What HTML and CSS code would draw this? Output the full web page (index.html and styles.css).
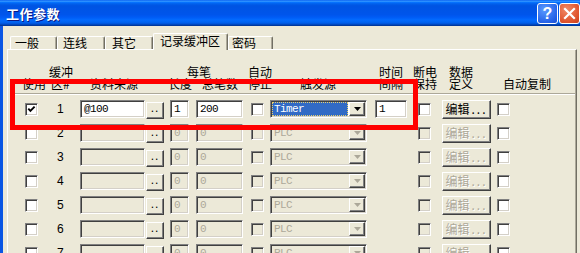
FILE: index.html
```
<!DOCTYPE html>
<html lang="zh-CN">
<head>
    <meta charset="UTF-8">
    <meta name="viewport" content="width=device-width, initial-scale=1.0">
    <title>工作参数</title>
    <link rel="stylesheet" href="styles.css">
</head>
<body>
<div class="window">
    <div class="titlebar">
        <span class="title">工作参数</span>
        <div class="caption">
            <span class="cap cap-help">?</span>
            <span class="cap cap-close">
                <svg width="19" height="19" viewBox="0 0 19 19"><path d="M5 5 L14 14 M14 5 L5 14" stroke="#fff" stroke-width="2.2" stroke-linecap="square"/></svg>
            </span>
        </div>
    </div>

    <div class="client">
        <!-- tab strip -->
        <div class="tabs">
            <span class="tab t-general">一般</span>
            <span class="tab t-link">连线</span>
            <span class="tab t-other">其它</span>
            <span class="tab t-buffer on">记录缓冲区</span>
            <span class="tab t-pass">密码</span>
        </div>

        <div class="panel">
            <!-- column headers, two lines -->
            <div class="hdr">
                <span class="h-buf1">缓冲</span>
                <span class="h-each">每笔</span>
                <span class="h-auto">自动</span>
                <span class="h-time">时间</span>
                <span class="h-power">断电</span>
                <span class="h-data">数据</span>

                <span class="h-use">使用</span>
                <span class="h-buf2">区#</span>
                <span class="h-src">资料来源</span>
                <span class="h-len">长度</span>
                <span class="h-tot">总笔数</span>
                <span class="h-stop">停止</span>
                <span class="h-trig">触发源</span>
                <span class="h-int">间隔</span>
                <span class="h-keep">保持</span>
                <span class="h-def">定义</span>
                <span class="h-copy">自动复制</span>
            </div>
            <div class="sep"></div>

            <div class="row">
                <span class="chk chk-use"><svg width="9" height="9" viewBox="0 0 9 9"><polyline points="1.3,3.6 3.4,5.8 7.6,1.6" fill="none" stroke="#000" stroke-width="1.9"/></svg></span>
                <span class="num">1</span>
                <span class="field w-src">@100</span>
                <span class="dots">..</span>
                <span class="field w-len">1</span>
                <span class="field w-tot">200</span>
                <span class="chk"></span>
                <span class="sel">
                    <span class="sel-val">Timer</span>
                    <span class="sel-btn"><svg width="7" height="4" viewBox="0 0 7 4"><polygon points="0,0 7,0 3.5,4" fill="#000"/></svg></span>
                </span>
                <span class="field w-int">1</span>
                <span class="chk"></span>
                <span class="edit">编辑<span class="ell">...</span></span>
                <span class="chk"></span>
            </div>

            <div class="row">
                <span class="chk chk-use"></span>
                <span class="num">2</span>
                <span class="field off w-src"></span>
                <span class="dots">..</span>
                <span class="field off w-len">0</span>
                <span class="field off w-tot">0</span>
                <span class="chk off"></span>
                <span class="sel off">
                    <span class="sel-val">PLC</span>
                    <span class="sel-btn"><svg width="7" height="4" viewBox="0 0 7 4"><polygon points="0,0 7,0 3.5,4" fill="#ACA899"/></svg></span>
                </span>
                <span></span>
                <span class="chk off"></span>
                <span class="edit off">编辑<span class="ell">...</span></span>
                <span class="chk"></span>
            </div>

            <div class="row">
                <span class="chk chk-use"></span>
                <span class="num">3</span>
                <span class="field off w-src"></span>
                <span class="dots">..</span>
                <span class="field off w-len">0</span>
                <span class="field off w-tot">0</span>
                <span class="chk off"></span>
                <span class="sel off">
                    <span class="sel-val">PLC</span>
                    <span class="sel-btn"><svg width="7" height="4" viewBox="0 0 7 4"><polygon points="0,0 7,0 3.5,4" fill="#ACA899"/></svg></span>
                </span>
                <span></span>
                <span class="chk off"></span>
                <span class="edit off">编辑<span class="ell">...</span></span>
                <span class="chk"></span>
            </div>

            <div class="row">
                <span class="chk chk-use"></span>
                <span class="num">4</span>
                <span class="field off w-src"></span>
                <span class="dots">..</span>
                <span class="field off w-len">0</span>
                <span class="field off w-tot">0</span>
                <span class="chk off"></span>
                <span class="sel off">
                    <span class="sel-val">PLC</span>
                    <span class="sel-btn"><svg width="7" height="4" viewBox="0 0 7 4"><polygon points="0,0 7,0 3.5,4" fill="#ACA899"/></svg></span>
                </span>
                <span></span>
                <span class="chk off"></span>
                <span class="edit off">编辑<span class="ell">...</span></span>
                <span class="chk"></span>
            </div>

            <div class="row">
                <span class="chk chk-use"></span>
                <span class="num">5</span>
                <span class="field off w-src"></span>
                <span class="dots">..</span>
                <span class="field off w-len">0</span>
                <span class="field off w-tot">0</span>
                <span class="chk off"></span>
                <span class="sel off">
                    <span class="sel-val">PLC</span>
                    <span class="sel-btn"><svg width="7" height="4" viewBox="0 0 7 4"><polygon points="0,0 7,0 3.5,4" fill="#ACA899"/></svg></span>
                </span>
                <span></span>
                <span class="chk off"></span>
                <span class="edit off">编辑<span class="ell">...</span></span>
                <span class="chk"></span>
            </div>

            <div class="row">
                <span class="chk chk-use"></span>
                <span class="num">6</span>
                <span class="field off w-src"></span>
                <span class="dots">..</span>
                <span class="field off w-len">0</span>
                <span class="field off w-tot">0</span>
                <span class="chk off"></span>
                <span class="sel off">
                    <span class="sel-val">PLC</span>
                    <span class="sel-btn"><svg width="7" height="4" viewBox="0 0 7 4"><polygon points="0,0 7,0 3.5,4" fill="#ACA899"/></svg></span>
                </span>
                <span></span>
                <span class="chk off"></span>
                <span class="edit off">编辑<span class="ell">...</span></span>
                <span class="chk"></span>
            </div>

            <div class="row">
                <span class="chk chk-use"></span>
                <span class="num">7</span>
                <span class="field off w-src"></span>
                <span class="dots">..</span>
                <span class="field off w-len">0</span>
                <span class="field off w-tot">0</span>
                <span class="chk off"></span>
                <span class="sel off">
                    <span class="sel-val">PLC</span>
                    <span class="sel-btn"><svg width="7" height="4" viewBox="0 0 7 4"><polygon points="0,0 7,0 3.5,4" fill="#ACA899"/></svg></span>
                </span>
                <span></span>
                <span class="chk off"></span>
                <span class="edit off">编辑<span class="ell">...</span></span>
                <span class="chk"></span>
            </div>
        </div>
    </div>

    <!-- red annotation box drawn over the first row -->
    <div class="mark"></div>
</div>
</body>
</html>
```

FILE: styles.css
```
body {
    margin: 0;
    width: 580px;
    height: 253px;
    overflow: hidden;
    background: #ECE9D8;
    font-family: "Noto Sans CJK SC", sans-serif;
    font-size: 12px;
    color: #000;
}
.window {
    position: relative;
    width: 580px;
    height: 253px;
    overflow: hidden;
}

/* title bar */
.titlebar {
    height: 26px;
    display: flex;
    align-items: center;
    justify-content: space-between;
    padding-left: 6px;
    background: linear-gradient(#0058EE 0%, #3593FF 4%, #288EFF 6%, #127DFF 8%, #036FFC 10%, #0262EE 14%, #0057E5 20%, #0054E3 24%, #0055EB 56%, #005BF5 66%, #026AFE 76%, #0062EF 86%, #0052D6 92%, #0040AB 96%, #003092 100%);
}
.title {
    color: #fff;
    font-weight: bold;
    font-size: 13px;
    letter-spacing: 0.5px;
    text-shadow: 1px 1px #0A1883;
}
.caption {
    display: flex;
    gap: 1px;
    padding-top: 1px;
}
.cap {
    width: 21px;
    height: 21px;
    box-sizing: border-box;
    border: 1px solid #fff;
    border-radius: 3px;
    display: flex;
    align-items: center;
    justify-content: center;
    color: #fff;
}
.cap-help {
    background: radial-gradient(circle at 35% 30%, #5A9BFF, #2663E8 70%, #1B4FD0);
    font-family: "Liberation Sans", sans-serif;
    font-weight: bold;
    font-size: 16px;
}
.cap-close {
    background: radial-gradient(circle at 35% 30%, #F08A68, #E0552E 65%, #C8401E);
}

/* client area */
.client {
    border-left: 3px solid #0A56E4;
    padding: 7px 0 0 4px;
}
.tabs {
    display: flex;
    align-items: flex-end;
    height: 16px;
    margin-left: 3px;
    position: relative;
    z-index: 1;
}
.tab {
    box-sizing: border-box;
    height: 13px;
    border-top: 1px solid #fff;
    border-left: 1px solid #fff;
    border-right: 1px solid #716F64;
    box-shadow: inset -1px 0 #ACA899;
    border-radius: 2px 2px 0 0;
    padding-left: 4px;
    line-height: 12px;
    white-space: nowrap;
}
.t-general { width: 47px; }
.t-link { width: 48px; padding-left: 5px; }
.t-other { width: 48px; padding-left: 6px; }
.t-buffer { width: 75px; padding-left: 6px; }
.t-pass { width: 45px; padding-left: 3px; }
.tab.on {
    height: 17px;
    margin-bottom: -1px;
    padding-top: 1px;
    background: #ECE9D8;
}

.panel {
    --cols: 33px 32px 66px 24px 26px 55px 19px 105px 43px 24px 55px 78px;
    box-sizing: border-box;
    width: 570px;
    height: 260px;
    border-top: 1px solid #fff;
    border-left: 1px solid #fff;
    border-right: 1px solid #716F64;
    box-shadow: inset -1px 0 #ACA899;
    padding: 16px 0 0 7px;
}

/* headers */
.hdr {
    display: grid;
    grid-template-columns: var(--cols);
    grid-template-rows: 12px 12px;
    line-height: 12px;
    white-space: nowrap;
    justify-items: start;
}
.h-buf1 { grid-area: 1 / 2; margin-left: 1px; }
.h-each { grid-area: 1 / 5; margin-left: 17px; }
.h-auto { grid-area: 1 / 7; margin-left: -3px; }
.h-time { grid-area: 1 / 9; margin-left: 4px; }
.h-power { grid-area: 1 / 10; margin-left: -5px; }
.h-data { grid-area: 1 / 11; margin-left: 7px; }
.h-use { grid-area: 2 / 1; margin-left: 7px; }
.h-buf2 { grid-area: 2 / 2; margin-left: 3px; }
.h-src { grid-area: 2 / 3; margin-left: 10px; }
.h-len { grid-area: 2 / 5; margin-left: -2px; }
.h-tot { grid-area: 2 / 6; margin-left: 6px; }
.h-stop { grid-area: 2 / 7; margin-left: -3px; }
.h-trig { grid-area: 2 / 8; margin-left: 30px; }
.h-int { grid-area: 2 / 9; margin-left: 4px; }
.h-keep { grid-area: 2 / 10; margin-left: -5px; }
.h-def { grid-area: 2 / 11; margin-left: 7px; }
.h-copy { grid-area: 2 / 12; margin-left: 6px; }

.sep {
    width: 560px;
    margin: 3px 0 2px;
    border-top: 1px solid #ACA899;
    border-bottom: 1px solid #fff;
}

/* rows */
.row {
    display: grid;
    grid-template-columns: var(--cols);
    height: 24px;
    align-items: center;
    justify-items: start;
}
.num {
    margin-left: 9px;
    font-family: "Liberation Sans", sans-serif;
    font-size: 12px;
}

.chk, .field, .sel {
    box-sizing: border-box;
    border: 1px solid;
    border-color: #808080 #fff #fff #808080;
    box-shadow: inset 1px 1px #404040, inset -1px -1px #D4D0C8;
    background: #fff;
}
.chk {
    width: 13px;
    height: 13px;
    padding: 1px;
    display: flex;
}
.chk-use { margin-left: 10px; }
.chk.off { background: #ECE9D8; }

.field {
    height: 18px;
    padding: 1px 3px;
    font-family: "Liberation Mono", monospace;
    font-size: 11px;
    letter-spacing: -0.6px;
    line-height: 15px;
}
.field.off { background: #ECE9D8; color: #ACA899; }
.w-src { width: 65px; }
.w-len { width: 19px; }
.w-tot { width: 47px; }
.w-int { width: 32px; }

/* raised buttons */
.dots, .edit, .sel-btn {
    box-sizing: border-box;
    background: #ECE9D8;
    border: 1px solid;
    border-color: #fff #404040 #404040 #fff;
    box-shadow: inset -1px -1px #808080;
}
.dots {
    width: 18px;
    height: 17px;
    margin-top: 3px;
    font-family: "Liberation Sans", sans-serif;
    font-size: 12px;
    line-height: 11px;
    text-align: center;
    letter-spacing: 1px;
}
.edit {
    width: 49px;
    height: 19px;
    line-height: 16px;
    text-align: center;
    white-space: nowrap;
}
.edit .ell { letter-spacing: 2px; margin-left: 2px; }
.edit.off { color: #ACA899; text-shadow: 1px 1px #fff; }

/* combo box */
.sel {
    width: 97px;
    height: 18px;
    display: flex;
    padding: 1px;
}
.sel-val {
    flex: 1;
    margin-right: 1px;
    background: #316AC5;
    color: #fff;
    outline: 1px dotted #E8D070;
    outline-offset: -1px;
    padding-left: 2px;
    font-family: "Liberation Mono", monospace;
    font-size: 11px;
    letter-spacing: -0.6px;
    line-height: 14px;
}
.sel-btn {
    width: 16px;
    display: flex;
    align-items: center;
    justify-content: center;
}
.sel.off { background: #ECE9D8; }
.sel.off .sel-val {
    background: none;
    outline: none;
    color: #ACA899;
}

/* red annotation */
.mark {
    position: absolute;
    left: 10px;
    top: 79px;
    width: 408px;
    height: 51px;
    box-sizing: border-box;
    border: 5px solid #f00;
}
```
